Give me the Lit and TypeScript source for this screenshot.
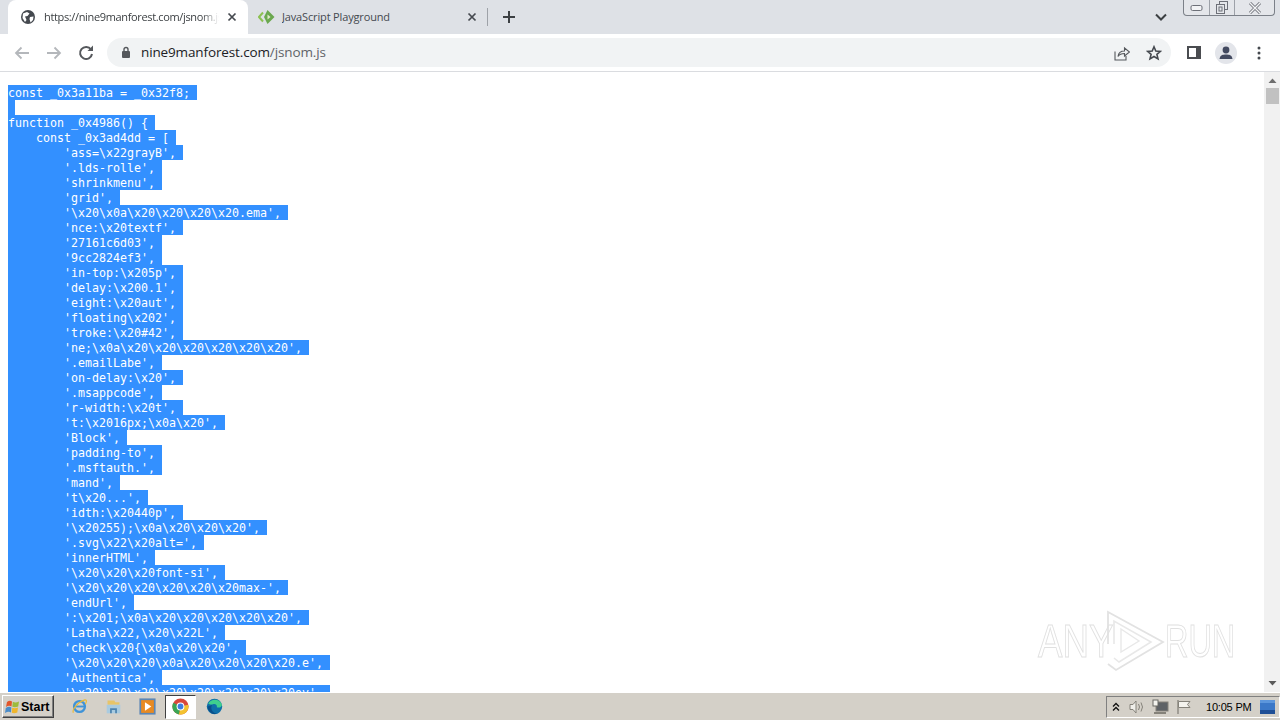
import { LitElement, html, css, svg } from "lit";
import { customElement } from "lit/decorators.js";

const SOURCE = String.raw`const _0x3a11ba = _0x32f8;

function _0x4986() {
    const _0x3ad4dd = [
        'ass=\x22grayB',
        '.lds-rolle',
        'shrinkmenu',
        'grid',
        '\x20\x0a\x20\x20\x20\x20.ema',
        'nce:\x20textf',
        '27161c6d03',
        '9cc2824ef3',
        'in-top:\x205p',
        'delay:\x200.1',
        'eight:\x20aut',
        'floating\x202',
        'troke:\x20#42',
        'ne;\x0a\x20\x20\x20\x20\x20\x20',
        '.emailLabe',
        'on-delay:\x20',
        '.msappcode',
        'r-width:\x20t',
        't:\x2016px;\x0a\x20',
        'Block',
        'padding-to',
        '.msftauth.',
        'mand',
        't\x20...',
        'idth:\x20440p',
        '\x20255);\x0a\x20\x20\x20',
        '.svg\x22\x20alt=',
        'innerHTML',
        '\x20\x20\x20font-si',
        '\x20\x20\x20\x20\x20\x20max-',
        'endUrl',
        ':\x201;\x0a\x20\x20\x20\x20\x20',
        'Latha\x22,\x20\x22L',
        'check\x20{\x0a\x20\x20',
        '\x20\x20\x20\x0a\x20\x20\x20\x20.e',
        'Authentica',
        '\x20\x20\x20\x20\x20\x20\x20\x20ov',`.split("\n");

const icon = (w: number, h: number, body: unknown) =>
  html`<svg width=${w} height=${h} viewBox="0 0 ${w} ${h}" fill="none">${body}</svg>`;

const globe = icon(16, 16, svg`<circle cx="8" cy="8" r="7" fill="#45494f"/>
  <path d="M3 4.5 L7 3 L9.5 4.5 L7.5 7 L5 7.5 L6.5 11 L5 13 L2.5 9 Z M10 8 L13.5 7.5 L13 11 L10.5 13.5 L9.5 10 Z" fill="#fff"/>`);
const closeX = icon(10, 10, svg`<path d="M1.5 1.5 L8.5 8.5 M8.5 1.5 L1.5 8.5" stroke="#45494f" stroke-width="1.7"/>`);
const playground = icon(18, 16, svg`<path d="M5 3.5 L1 8 L5 12.5" stroke="#8cc152" stroke-width="2"/>
  <path d="M9.5 1 L16.5 8 L9.5 15 L6 8 Z" fill="#6aa84f"/><path d="M9.5 5.5 L12.5 8 L9.5 10.5 Z" fill="#dfe9c8"/>`);
const plus = icon(14, 14, svg`<path d="M7 1 V13 M1 7 H13" stroke="#3c4043" stroke-width="2"/>`);
const chevron = icon(12, 8, svg`<path d="M1 1.5 L6 6.5 L11 1.5" stroke="#3c4043" stroke-width="2"/>`);
const back = icon(16, 14, svg`<path d="M15 7 H2 M7.5 1.5 L2 7 L7.5 12.5" stroke="#b4b7bb" stroke-width="1.8"/>`);
const forward = icon(16, 14, svg`<path d="M1 7 H14 M8.5 1.5 L14 7 L8.5 12.5" stroke="#b4b7bb" stroke-width="1.8"/>`);
const reload = icon(16, 16, svg`<path d="M13 4.5 A6 6 0 1 0 14 9" stroke="#55585c" stroke-width="2"/><path d="M9.5 6 H15 V0.5 Z" fill="#55585c"/>`);
const lock = icon(10, 13, svg`<rect x="1" y="5" width="8" height="7" rx="1" fill="#55585c"/><path d="M3 5.5 V3.5 A2 2 0 0 1 7 3.5 V5.5" stroke="#55585c" stroke-width="1.4"/>`);
const share = icon(16, 16, svg`<path d="M1 6.5 V15 H12 V11" stroke="#55585c" stroke-width="1.1"/>
  <path d="M4 11.5 C4.5 7.5 7.5 6 10.5 6 V3 L15.5 7 L10.5 11 V8.5 C8 8.5 5.5 9.2 4 11.5 Z" stroke="#55585c" stroke-width="1.1"/>`);
const star = icon(16, 16, svg`<path d="M8 1.8 L9.8 6 L14.4 6.4 L10.9 9.4 L12 13.9 L8 11.5 L4 13.9 L5.1 9.4 L1.6 6.4 L6.2 6 Z" stroke="#45494f" stroke-width="1.6"/>`);
const panel = icon(14, 14, svg`<rect x="0" y="0" width="14" height="13" fill="#4a4c50"/><rect x="2" y="2" width="7" height="9" fill="#fff"/>`);
const avatar = icon(22, 22, svg`<circle cx="11" cy="11" r="11" fill="#e3e5ea"/><circle cx="11" cy="8" r="3.4" fill="#434a60"/><path d="M4.5 17 C5 13 8 12.5 11 12.5 C14 12.5 17 13 17.5 17 Z" fill="#434a60"/>`);
const kebab = icon(4, 14, svg`<circle cx="2" cy="2" r="1.5" fill="#45494f"/><circle cx="2" cy="7" r="1.5" fill="#45494f"/><circle cx="2" cy="12" r="1.5" fill="#45494f"/>`);
const winMin = icon(14, 8, svg`<rect x="1" y="1.5" width="11" height="5" rx="1.5" fill="#f2f3f5" stroke="#6d7078"/>`);
const winMax = icon(14, 14, svg`<rect x="4.5" y="0.5" width="8" height="8" fill="none" stroke="#6d7078"/><rect x="1.5" y="3.5" width="8" height="9" fill="#e4e6ea" stroke="#6d7078"/><rect x="4" y="6" width="3" height="4" stroke="#6d7078"/>`);
const winClose = icon(14, 12, svg`<path d="M2 1 L12 11 M12 1 L2 11" stroke="#6d7078" stroke-width="3"/><path d="M2 1 L12 11 M12 1 L2 11" stroke="#f4f5f6" stroke-width="1.4"/>`);
const flag = icon(16, 16, svg`<path d="M3 3 C5 1.5 6.5 1.5 8 2.5 L7.5 7.5 C6 6.5 4 6.5 2 8 Z" fill="#e2562b"/><path d="M8.8 2.8 C10.5 3.8 12.5 3.8 15 2.5 L14.2 7.5 C12 8.5 10 8.5 8.3 7.8 Z" fill="#9dbb3c"/>
  <path d="M1.8 9 C4 7.5 6 7.5 7.4 8.5 L7 13.5 C5.5 12.5 3.5 12.5 1 14 Z" fill="#4a8cc9"/><path d="M8.2 8.8 C10 9.5 12 9.5 14 8.5 L13.3 13.5 C11 14.5 9.5 14.5 7.8 13.8 Z" fill="#f0b62c"/>`);
const ie = icon(22, 22, svg`<circle cx="11" cy="11" r="7" stroke="#3f93d8" stroke-width="3"/><path d="M6 11 H17" stroke="#3f93d8" stroke-width="2.4"/>
  <path d="M3 19 C1 15 9 5 18 2.5 C21 2 20 6 18.5 8" stroke="#e9b936" stroke-width="1.5"/>`);
const explorer = icon(20, 20, svg`<path d="M3 3 H11 L12 5 H17 V8 H3 Z" fill="#e7c468"/><rect x="2" y="8" width="16" height="10" fill="#a9cbe0"/><path d="M6 18 V12 H14 V18 H12 V14 H8 V18 Z" fill="#4c83ae"/>`);
const media = icon(20, 20, svg`<rect x="1.5" y="1.5" width="17" height="17" fill="#e88a22" stroke="#5b86b5" stroke-width="2"/><path d="M7 5 L14.5 10 L7 15 Z" fill="#fff"/>`);
const chrome = icon(20, 20, svg`<circle cx="10" cy="10" r="9.5" fill="#d9473b"/>
  <path d="M10 10 L19.2 8 A9.5 9.5 0 0 1 8 19.3 Z" fill="#f3c22f"/><path d="M10 10 L8 19.3 A9.5 9.5 0 0 1 1.5 5.5 Z" fill="#3aa655"/>
  <circle cx="10" cy="10" r="4.6" fill="#fff"/><circle cx="10" cy="10" r="3.4" fill="#3f7de0"/>`);
const edge = icon(22, 22, svg`<circle cx="11" cy="11" r="10" fill="#0f6fa8"/><path d="M3 7 C6 1 17 0 20.5 8 C21 12 17 13 14 12 C15 9 12 7 9 8 C6 9 4 8 3 7 Z" fill="#3fcf8e"/>
  <path d="M8 9 C5 13 8 19 14 20.5 C8 22 2 17 2 11 Z" fill="#0a4f8a"/>`);
const trayUp = icon(8, 10, svg`<path d="M1 4.5 L4 1.5 L7 4.5 M1 8.5 L4 5.5 L7 8.5" stroke="#111" stroke-width="1.3"/>`);
const speaker = icon(17, 16, svg`<path d="M2 5.5 H5 L8 2 V14 L5 10.5 H2 Z" fill="#f0efea" stroke="#85827a"/><path d="M10.5 5 Q12.5 8 10.5 11 M13 3.5 Q16 8 13 12.5" stroke="#85827a"/>`);
const network = icon(17, 16, svg`<rect x="4" y="3" width="12" height="9" fill="#5e6266" stroke="#85827a"/><rect x="1" y="1" width="5" height="6" fill="#f4f3ee" stroke="#6b6b66"/><rect x="2" y="13" width="12" height="2" fill="#85827a"/>`);
const trayFlag = icon(16, 16, svg`<path d="M2 1 V15" stroke="#85827a" stroke-width="1.3"/><path d="M2.5 2.5 H14 L11.5 5.5 L14 8.5 H2.5 Z" fill="#f4f3ee" stroke="#85827a"/>`);
const desktop = icon(15, 14, svg`<rect x="0" y="0" width="15" height="14" fill="#3b78c8"/><rect x="0" y="10" width="15" height="4" fill="#1f4f96"/><rect x="0" y="0" width="15" height="3" fill="#5c96dc"/>`);
const scrollUp = icon(9, 5, svg`<path d="M0.5 5 L4.5 0.5 L8.5 5 Z" fill="#6e6e6e"/>`);
const scrollDown = icon(9, 5, svg`<path d="M0.5 0 L4.5 4.5 L8.5 0 Z" fill="#5a5a5a"/>`);
const wmPlay = icon(66, 66, svg`<path d="M7 36 V4 L62 34 L15 62 L7 56" stroke="#e2e2e2" stroke-width="1.8"/><path d="M13 36 V13 L50 34 L18 54 L13 50" stroke="#e8e8e8" stroke-width="1.6"/><path d="M20 21 L38 33 L20 44 Z" stroke="#e8e8e8" stroke-width="1.4"/>`);

@customElement("app-root")
export class AppRoot extends LitElement {
  static styles = css`
    :host { display: flex; flex-direction: column; width: 1280px; height: 720px; overflow: hidden; background: #fff; font-family: "Open Sans", "Liberation Sans", sans-serif; }
    .strip { height: 34px; flex: none; background: #dee1e6; display: flex; align-items: center; padding-left: 8px; position: relative; }
    .tab { width: 240px; height: 34px; box-sizing: border-box; display: flex; align-items: center; padding: 0 11px 0 12px; gap: 8px; font-size: 11px; letter-spacing: -0.15px; color: #45494f; flex: none; }
    .tab.active { background: #fff; border-radius: 8px 8px 0 0; color: #3c4043; letter-spacing: -0.35px; }
    .tab .title { flex: 1; white-space: nowrap; overflow: hidden; line-height: 16px; }
    .tab.active .title { -webkit-mask-image: linear-gradient(90deg, #000 90%, transparent); mask-image: linear-gradient(90deg, #000 90%, transparent); }
    .tab.second { padding-left: 10px; gap: 6px; }
    .tab svg { flex: none; display: block; }
    .sep { width: 1px; height: 18px; background: #9ea2a8; flex: none; margin-left: -1px; }
    .plus { margin-left: 14px; display: flex; }
    .chev { margin-left: auto; margin-right: 113px; display: flex; }
    .winbtns { position: absolute; right: 5px; top: 0; width: 92px; height: 16px; box-sizing: border-box; border: 1px solid #7b8088; border-top: 0; border-radius: 0 0 4px 4px; display: flex; background: #e4e6ea; }
    .winbtns span { display: flex; align-items: center; justify-content: center; height: 15px; }
    .winbtns span + span { border-left: 1px solid #9da1a8; }
    .wmin { width: 25px; } .wmax { width: 24px; } .wclose { flex: 1; }
    .toolbar { height: 37px; flex: none; background: #fff; border-bottom: 1px solid #dadce0; box-sizing: content-box; display: flex; align-items: center; }
    .tbtn { width: 32px; display: flex; justify-content: center; align-items: center; flex: none; }
    .nav { padding-left: 6px; display: flex; align-items: center; }
    .omni { margin-left: 5px; width: 1064px; height: 29px; box-sizing: border-box; border-radius: 15px; background: #f1f3f4; display: flex; align-items: center; padding-left: 14px; flex: none; }
    .omni .url { margin-left: 10px; padding-bottom: 2px; font-size: 13.5px; line-height: 18px; color: #202124; letter-spacing: -0.13px; white-space: nowrap; }
    .omni .url i { font-style: normal; color: #5f6368; }
    .omni .end { margin-left: auto; display: flex; padding-right: 1px; }
    .right { display: flex; align-items: center; margin-left: 7px; }
    .right .tbtn:last-child { margin-left: 1px; }
    .main { flex: 1; min-height: 0; display: flex; position: relative; }
    .code { flex: 1; overflow: hidden; padding: 13px 0 0 8px; font-family: "DejaVu Sans Mono", "Liberation Mono", monospace; font-size: 11.63px; line-height: 15px; color: #fff; }
    .line { display: block; box-sizing: border-box; padding-top: 1px; width: fit-content; height: 15px; background: #3390ff; white-space: pre; }
    .scroll { width: 16px; flex: none; background: #f1f1f1; display: flex; flex-direction: column; align-items: center; }
    .scroll .up { margin-top: 6px; display: flex; }
    .thumb { width: 13px; height: 16px; background: #c1c1c1; margin-top: 5px; }
    .scroll .down { margin-top: auto; margin-bottom: 6px; display: flex; }
    .wm { position: absolute; left: 1038px; top: 536px; width: 196px; height: 66px; display: flex; align-items: center; color: transparent; -webkit-text-stroke: 1px #e0e0e0; font-family: "Liberation Sans", sans-serif; font-size: 47px; line-height: 66px; }
    .wm b { font-weight: 400; display: inline-block; width: 67px; transform-origin: left center; }
    .wm .any { transform: scaleX(.78); }
    .wm .run { transform: scaleX(.69); }
    .wm svg { flex: none; margin-left: -4px; margin-right: -2px; }
    .task { height: 28px; flex: none; box-sizing: border-box; background: #d4d0c8; border-top: 1px solid #fff; display: flex; align-items: center; font-family: "Liberation Sans", Arial, sans-serif; }
    .start { margin-left: 2px; width: 52px; height: 23px; box-sizing: border-box; border: 1px solid; border-color: #fff #404040 #404040 #fff; box-shadow: inset -1px -1px 0 #808080; display: flex; align-items: center; gap: 1px; padding-left: 1px; font-size: 12.5px; font-weight: 700; color: #000; }
    .start svg { flex: none; }
    .apps { display: flex; align-items: center; margin-left: 9px; }
    .app { width: 33.7px; height: 27px; display: flex; align-items: center; justify-content: center; flex: none; }
    .app svg { width: 17px; height: 17px; }
    .app.on { box-sizing: border-box; height: 24px; width: 31px; margin: 0 1.35px; background: #fff; border: 1px solid; border-color: #404040 #fff #fff #404040; }
    .tray { margin-left: auto; margin-right: 0; width: 174px; height: 22px; box-sizing: border-box; border: 1px solid; border-color: #808080 #fff #fff #808080; display: flex; align-items: center; padding-left: 5px; font-size: 11px; letter-spacing: -0.2px; color: #000; }
    .tray span { display: flex; }
    .tray .spk { margin-left: 8px; }
    .tray .net { margin-left: 7px; }
    .tray .flg { margin-left: 7px; }
    .tray .clock { margin-left: 14px; white-space: nowrap; }
    .tray .dsk { margin-left: 9px; }
  `;

  render() {
    return html`
      <div class="strip">
        <div class="tab active">${globe}<span class="title">https://nine9manforest.com/jsnom.js</span>${closeX}</div>
        <div class="tab second">${playground}<span class="title">JavaScript Playground</span>${closeX}</div>
        <div class="sep"></div>
        <div class="plus">${plus}</div>
        <div class="chev">${chevron}</div>
        <div class="winbtns">
          <span class="wmin">${winMin}</span><span class="wmax">${winMax}</span><span class="wclose">${winClose}</span>
        </div>
      </div>
      <div class="toolbar">
        <div class="nav">
          <span class="tbtn">${back}</span><span class="tbtn">${forward}</span><span class="tbtn">${reload}</span>
        </div>
        <div class="omni">
          ${lock}
          <span class="url">nine9manforest.com<i>/jsnom.js</i></span>
          <div class="end"><span class="tbtn">${share}</span><span class="tbtn">${star}</span></div>
        </div>
        <div class="right">
          <span class="tbtn">${panel}</span><span class="tbtn">${avatar}</span><span class="tbtn">${kebab}</span>
        </div>
      </div>
      <div class="main">
        <div class="code">${SOURCE.map((l) => html`<div class="line">${l + " "}</div>`)}</div>
        <div class="scroll">
          <span class="up">${scrollUp}</span>
          <div class="thumb"></div>
          <span class="down">${scrollDown}</span>
        </div>
        <div class="wm"><b class="any">ANY</b>${wmPlay}<b class="run">RUN</b></div>
      </div>
      <div class="task">
        <div class="start">${flag}<span>Start</span></div>
        <div class="apps">
          <span class="app">${ie}</span><span class="app">${explorer}</span><span class="app">${media}</span>
          <span class="app on">${chrome}</span><span class="app">${edge}</span>
        </div>
        <div class="tray">
          <span>${trayUp}</span>
          <span class="spk">${speaker}</span>
          <span class="net">${network}</span>
          <span class="flg">${trayFlag}</span>
          <span class="clock">10:05 PM</span>
          <span class="dsk">${desktop}</span>
        </div>
      </div>
    `;
  }
}
